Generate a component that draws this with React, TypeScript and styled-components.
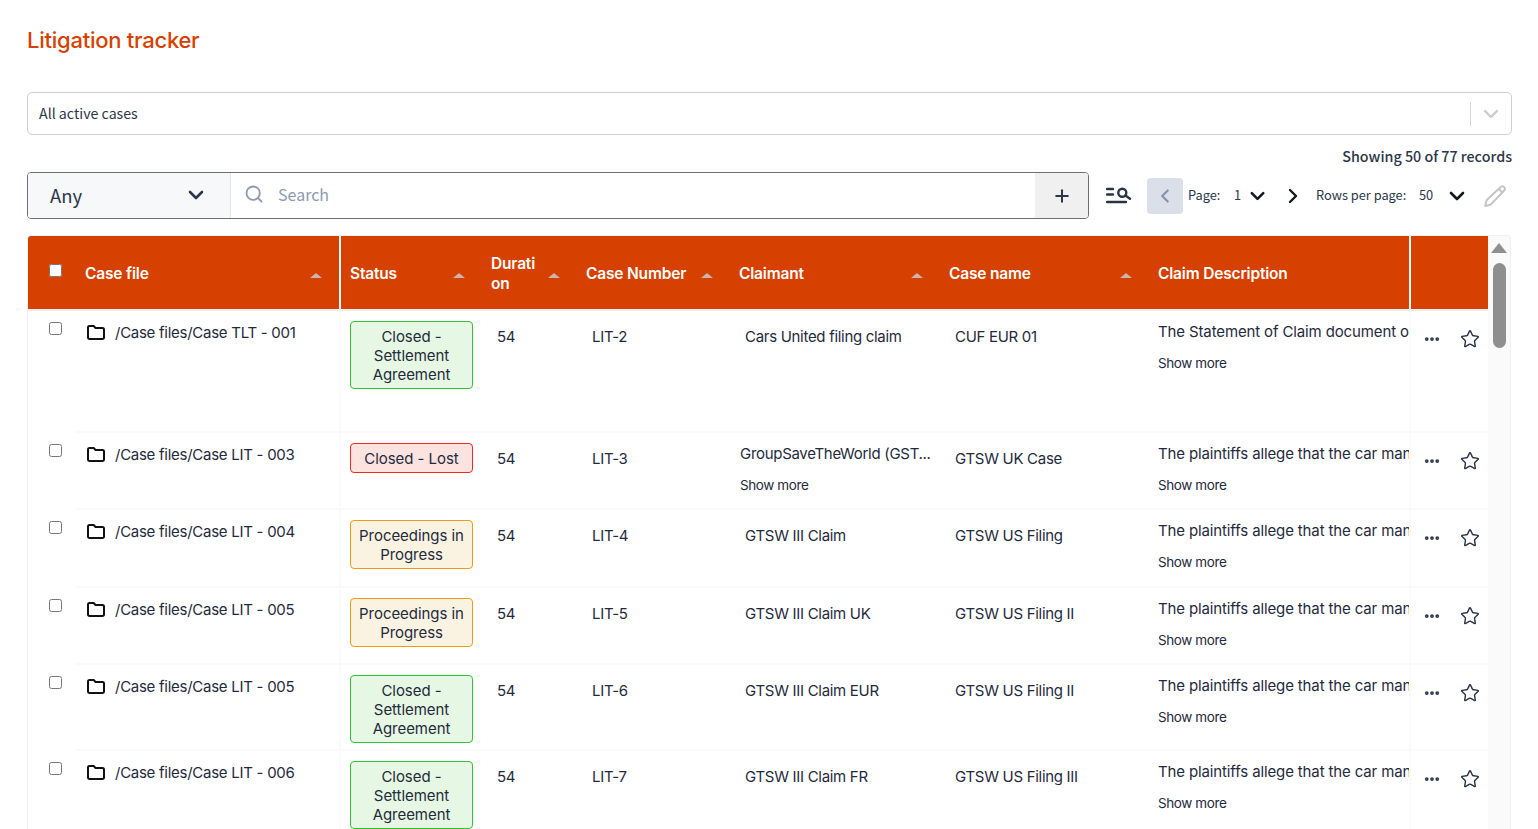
import React, { FunctionComponent } from 'react';
import styled, { createGlobalStyle } from 'styled-components';
import { ChevronDown, ChevronLeft, ChevronRight, Search, Plus, Star, Ellipsis } from 'lucide-react';

type Tone = 'settled' | 'lost' | 'progress';

type CaseRow = {
  file: string;
  status: string;
  tone: Tone;
  number: string;
  claimant: string;
  claimantMore?: boolean;
  name: string;
  description: string;
  tall?: boolean;
};

const settled = 'Closed - Settlement Agreement';
const allege = 'The plaintiffs allege that the car manufacturer';

const rows: CaseRow[] = [
  { file: '/Case files/Case TLT - 001', status: settled, tone: 'settled', number: 'LIT-2', claimant: 'Cars United filing claim', name: 'CUF EUR 01', description: 'The Statement of Claim document outlines', tall: true },
  { file: '/Case files/Case LIT - 003', status: 'Closed - Lost', tone: 'lost', number: 'LIT-3', claimant: 'GroupSaveTheWorld (GST...', claimantMore: true, name: 'GTSW UK Case', description: allege },
  { file: '/Case files/Case LIT - 004', status: 'Proceedings in Progress', tone: 'progress', number: 'LIT-4', claimant: 'GTSW III Claim', name: 'GTSW US Filing', description: allege },
  { file: '/Case files/Case LIT - 005', status: 'Proceedings in Progress', tone: 'progress', number: 'LIT-5', claimant: 'GTSW III Claim UK', name: 'GTSW US Filing II', description: allege },
  { file: '/Case files/Case LIT - 005', status: settled, tone: 'settled', number: 'LIT-6', claimant: 'GTSW III Claim EUR', name: 'GTSW US Filing II', description: allege },
  { file: '/Case files/Case LIT - 006', status: settled, tone: 'settled', number: 'LIT-7', claimant: 'GTSW III Claim FR', name: 'GTSW US Filing III', description: allege },
];

const toneColors: Record<Tone, { border: string; bg: string }> = {
  settled: { border: '#35c135', bg: '#e6f8e3' },
  lost: { border: '#f0281e', bg: '#fde3e0' },
  progress: { border: '#ee9c14', bg: '#fbf3e2' },
};

const columns = '48px 263px 2px 141px 95px 153px 210px 209px 260px 2px 77px';

const GlobalStyle = createGlobalStyle`
  html, body {
    margin: 0;
    padding: 0;
    height: 100%;
    overflow: hidden;
    background: #fff;
  }
  * { box-sizing: border-box; }
`;

const Page = styled.div`
  height: 829px;
  overflow: hidden;
  padding: 26px 26px 0 27px;
  color: #1f2a3c;
  font-family: 'Noto Sans CJK SC', 'Noto Sans', sans-serif;
`;

const Title = styled.h1`
  margin: 0;
  height: 66px;
  font-family: Inter, 'Noto Sans', sans-serif;
  font-size: 22px;
  line-height: 28px;
  font-weight: 500;
  letter-spacing: -0.25px;
  color: #d64000;
`;

const ViewSelect = styled.div`
  height: 43px;
  display: flex;
  align-items: center;
  padding-left: 11px;
  border: 1px solid #cfcfcf;
  border-radius: 5px;
  font-size: 14.2px;
  color: #2c3648;
`;

const ViewLabel = styled.span`
  flex: 1;
  padding-bottom: 2px;
`;

const ViewDivider = styled.span`
  width: 1px;
  height: 24px;
  background: #d4d4d4;
`;

const ViewChevron = styled.span`
  width: 40px;
  display: flex;
  justify-content: center;
  color: #cccccc;
`;

const RecordCount = styled.div`
  height: 37px;
  padding-top: 11px;
  text-align: right;
  font-size: 14.3px;
  line-height: 20px;
  font-weight: 500;
  color: #2c3648;
`;

const Toolbar = styled.div`
  display: flex;
  align-items: center;
  height: 47px;
`;

const SearchGroup = styled.div`
  width: 1062px;
  height: 47px;
  display: flex;
  border: 1px solid #6f6f6f;
  border-radius: 4px;
  overflow: hidden;
`;

const ScopeSelect = styled.div`
  width: 203px;
  display: flex;
  align-items: center;
  justify-content: space-between;
  padding: 0 22px 2px 22px;
  background: #f7f8fa;
  border-right: 1px solid #e6e6e6;
  font-size: 18.5px;
  color: #2c3648;
`;

const SearchField = styled.div`
  flex: 1;
  display: flex;
  align-items: center;
  gap: 14px;
  padding: 0 0 4px 13px;
  font-size: 16px;
  color: #8d9ab2;
`;

const AddButton = styled.div`
  width: 53px;
  display: flex;
  align-items: center;
  justify-content: center;
  background: #f0f0f1;
  color: #2c3648;
`;

const Pager = styled.div`
  display: flex;
  align-items: center;
  margin-left: 17px;
  font-size: 12.8px;
  color: #2c3648;
`;

const FilterIcon = styled.svg`
  width: 26px;
  height: 18px;
  margin-right: 15px;
`;

const PrevButton = styled.div`
  width: 36px;
  height: 36px;
  margin-right: 5px;
  display: flex;
  align-items: center;
  justify-content: center;
  border-radius: 4px;
  background: #dadfe9;
  color: #8793ac;
`;

const PagerText = styled.span<{ $width: number }>`
  width: ${(props) => props.$width}px;
  padding-bottom: 2px;
  white-space: nowrap;
`;

const PagerIcon = styled.span<{ $width: number }>`
  width: ${(props) => props.$width}px;
  display: flex;
  justify-content: center;
  color: #14181f;
`;

const PencilIcon = styled.svg`
  width: 26px;
  height: 26px;
  margin-left: 13px;
`;

const TableFrame = styled.div`
  margin-top: 16px;
  width: 1484px;
  height: 600px;
  display: flex;
  border: 1px solid #f0f0f0;
  border-bottom: 0;
  border-radius: 4px;
`;

const TableBody = styled.div`
  width: 1460px;
  overflow: hidden;
  font-family: Inter, 'Noto Sans', sans-serif;
`;

const HeaderRow = styled.div`
  display: grid;
  grid-template-columns: ${columns};
  height: 73px;
  background: #d64000;
  color: #fff;
  font-size: 15.5px;
  font-weight: 600;
  letter-spacing: -0.18px;
  border-radius: 3px 0 0 0;
`;

const HeaderCell = styled.div`
  display: flex;
  align-items: center;
  justify-content: space-between;
  line-height: 20px;
  padding: 2px 17px 0 9px;
`;

const HeaderCheck = styled.div`
  padding: 28px 0 0 21px;
`;

const HeaderGap = styled.div`
  background: #fff;
`;

const SortArrow = styled.span`
  flex: none;
  margin-top: 4px;
  width: 0;
  height: 0;
  border-left: 6px solid transparent;
  border-right: 6px solid transparent;
  border-bottom: 5px solid #c9b5ac;
`;

const HeaderSpacer = styled.div`
  height: 2px;
  background: #eeeeee;
`;

const Row = styled.div<{ $tall?: boolean }>`
  display: grid;
  grid-template-columns: ${columns};
  min-height: ${(props) => (props.$tall ? '121.5px' : '77.6px')};
  font-size: 15px;
  letter-spacing: -0.3px;
  color: #1f2a3c;
`;

const CheckCell = styled.div`
  padding: 11px 0 0 21px;
`;

const Check = styled.input.attrs({ type: 'checkbox', readOnly: true })`
  display: block;
  width: 13px;
  height: 13px;
  margin: 0;
`;

const Cell = styled.div`
  padding: 0 9px;
  border-bottom: 2px solid #fafafa;
  min-width: 0;
`;

const FileCell = styled(Cell)`
  display: flex;
  align-items: flex-start;
  gap: 10px;
  padding: 12px 0 0 11px;
  line-height: 20px;
  letter-spacing: -0.27px;
  white-space: nowrap;
`;

const FolderIcon = styled.svg`
  flex: none;
  width: 18px;
  height: 15px;
  margin-top: 2px;
`;

const ColumnGap = styled.div`
  background: #fafafa;
`;

const StatusCell = styled(Cell)`
  padding: 10px 9px 6px 9px;
`;

const Badge = styled.div<{ $tone: Tone }>`
  width: 123px;
  padding: 5px 2px 4px;
  border: 1px solid ${(props) => toneColors[props.$tone].border};
  border-radius: 4px;
  background: ${(props) => toneColors[props.$tone].bg};
  font-size: 15px;
  line-height: 19px;
  letter-spacing: -0.05px;
  text-align: center;
`;

const TextCell = styled(Cell)`
  padding: 16px 0 0 15px;
  line-height: 20px;
  white-space: nowrap;
`;

const ClaimantCell = styled(Cell)<{ $more?: boolean }>`
  padding: ${(props) => (props.$more ? '11px 0 0 10px' : '16px 0 0 15px')};
  line-height: 20px;
  white-space: nowrap;
`;

const DescriptionCell = styled(Cell)`
  padding: 11px 0 0 9px;
  line-height: 20px;
  letter-spacing: -0.13px;
  overflow: hidden;
`;

const ClampedText = styled.div`
  white-space: nowrap;
  overflow: hidden;
`;

const ShowMore = styled.div`
  margin-top: 12px;
  font-size: 13.5px;
  line-height: 18px;
  letter-spacing: -0.4px;
`;

const ActionCell = styled(Cell)`
  display: flex;
  align-items: flex-start;
  gap: 19px;
  padding: 18px 0 0 12px;
  color: #2b3445;
`;

const Dots = styled(Ellipsis)`
  margin-top: 1px;
`;

const Scrollbar = styled.div`
  flex: 1;
  display: flex;
  flex-direction: column;
  align-items: center;
  background: #fafafa;
  padding-top: 7px;
`;

const ScrollArrow = styled.span`
  width: 0;
  height: 0;
  border-left: 8px solid transparent;
  border-right: 8px solid transparent;
  border-bottom: 10px solid #8f8f8f;
`;

const ScrollThumb = styled.div`
  margin-top: 10px;
  width: 13px;
  height: 85px;
  border-radius: 7px;
  background: #8f8f8f;
`;

const Folder: FunctionComponent = () => (
  <FolderIcon viewBox="0 0 18 15" fill="none">
    <path d="M1 2.500A1.500 1.500 0 0 1 2.500 1h4.200l1.800 2h7A1.500 1.500 0 0 1 17 4.500v8a1.500 1.500 0 0 1-1.500 1.500h-13A1.500 1.500 0 0 1 1 12.500Z" stroke="#111" strokeWidth="2" />
  </FolderIcon>
);

const CaseTableRow: FunctionComponent<{ row: CaseRow }> = ({ row }) => (
  <Row $tall={row.tall}>
    <CheckCell><Check /></CheckCell>
    <FileCell><Folder />{row.file}</FileCell>
    <ColumnGap />
    <StatusCell><Badge $tone={row.tone}>{row.status}</Badge></StatusCell>
    <TextCell>54</TextCell>
    <TextCell>{row.number}</TextCell>
    <ClaimantCell $more={row.claimantMore}>
      {row.claimant}
      {row.claimantMore && <ShowMore>Show more</ShowMore>}
    </ClaimantCell>
    <TextCell>{row.name}</TextCell>
    <DescriptionCell>
      <ClampedText>{row.description}</ClampedText>
      <ShowMore>Show more</ShowMore>
    </DescriptionCell>
    <ColumnGap />
    <ActionCell>
      <Dots size={18} strokeWidth={3} />
      <Star size={20} strokeWidth={1.7} />
    </ActionCell>
  </Row>
);

const App: FunctionComponent = () => (
  <Page>
    <GlobalStyle />
    <Title>Litigation tracker</Title>
    <ViewSelect>
      <ViewLabel>All active cases</ViewLabel>
      <ViewDivider />
      <ViewChevron><ChevronDown size={24} strokeWidth={2.4} /></ViewChevron>
    </ViewSelect>
    <RecordCount>Showing 50 of 77 records</RecordCount>
    <Toolbar>
      <SearchGroup>
        <ScopeSelect>Any<ChevronDown size={24} strokeWidth={2.6} /></ScopeSelect>
        <SearchField><Search size={20} strokeWidth={2.2} />Search</SearchField>
        <AddButton><Plus size={20} strokeWidth={2.4} /></AddButton>
      </SearchGroup>
      <Pager>
        <FilterIcon viewBox="0 0 26 18" fill="none" stroke="#2b3445" strokeWidth="2.4" strokeLinecap="round">
          <path d="M1 2h6M1 7.500h6M1 15h19" />
          <circle cx="16.300" cy="5.700" r="4" />
          <path d="m19.500 8.500 4.500 3.200" />
        </FilterIcon>
        <PrevButton><ChevronLeft size={22} strokeWidth={2.4} /></PrevButton>
        <PagerText $width={46}>Page:</PagerText>
        <PagerText $width={12}>1</PagerText>
        <PagerIcon $width={23}><ChevronDown size={24} strokeWidth={2.6} /></PagerIcon>
        <PagerIcon $width={47}><ChevronRight size={24} strokeWidth={2.4} /></PagerIcon>
        <PagerText $width={103}>Rows per page:</PagerText>
        <PagerText $width={25}>50</PagerText>
        <PagerIcon $width={25}><ChevronDown size={24} strokeWidth={2.6} /></PagerIcon>
        <PencilIcon viewBox="0 0 24 24" fill="none" stroke="#c4c4c4" strokeWidth="1.8" strokeLinejoin="round">
          <path d="M17.500 3.500a2.300 2.300 0 0 1 3.200 3.200L8 20l-5 1.200L4.200 16Z" />
          <path d="m15.500 5.500 3.200 3.200" />
        </PencilIcon>
      </Pager>
    </Toolbar>
    <TableFrame>
      <TableBody>
        <HeaderRow>
          <HeaderCheck><Check /></HeaderCheck>
          <HeaderCell>Case file<SortArrow /></HeaderCell>
          <HeaderGap />
          <HeaderCell>Status<SortArrow /></HeaderCell>
          <HeaderCell>Durati<br />on<SortArrow /></HeaderCell>
          <HeaderCell>Case Number<SortArrow /></HeaderCell>
          <HeaderCell>Claimant<SortArrow /></HeaderCell>
          <HeaderCell>Case name<SortArrow /></HeaderCell>
          <HeaderCell>Claim Description</HeaderCell>
          <HeaderGap />
          <HeaderCell />
        </HeaderRow>
        <HeaderSpacer />
        {rows.map((row) => (
          <CaseTableRow key={row.number} row={row} />
        ))}
      </TableBody>
      <Scrollbar>
        <ScrollArrow />
        <ScrollThumb />
      </Scrollbar>
    </TableFrame>
  </Page>
);

export default App;
